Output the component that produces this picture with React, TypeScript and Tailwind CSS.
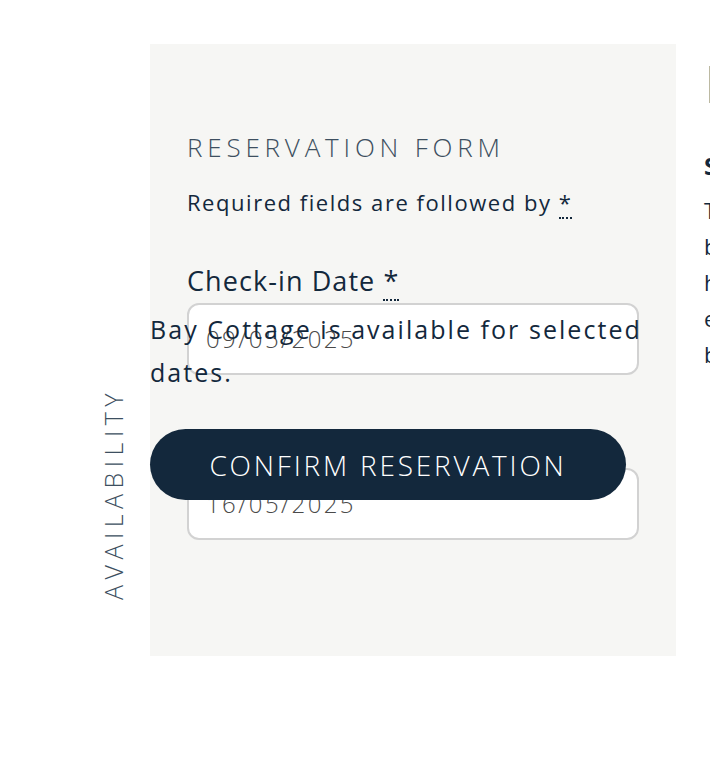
import React from "react";

const font = { fontFamily: "'Open Sans', 'Noto Sans', sans-serif" };

function DateField({ label, value }: { label: string; value: string }) {
  return (
    <div className="flex flex-col">
      <label className="text-[27px] leading-[30px] tracking-[0.04em] text-[#13283c]">
        {label}{" "}
        <abbr title="required" className="no-underline border-b-2 border-dotted border-[#13283c]">
          *
        </abbr>
      </label>
      <div className="mt-[7px] h-[72px] rounded-[12px] border-2 border-[#d2d2d2] bg-white px-[17px] flex items-center">
        <span className="text-[24px] font-light tracking-[0.1em] text-[#4a4a4a]">{value}</span>
      </div>
    </div>
  );
}

export default function App() {
  return (
    <div style={font} className="w-[710px] h-[776px] overflow-hidden bg-white">
      <div className="flex pt-[44px]">
        <div className="w-[150px] shrink-0 flex flex-col items-end justify-end pr-[22px] pb-[56px]">
          <span className="[writing-mode:vertical-rl] rotate-180 text-[25px] leading-[30px] font-light tracking-[0.22em] text-[#3d4f60]">
            AVAILABILITY
          </span>
        </div>

        <section className="relative w-[526px] h-[612px] shrink-0 bg-[#f6f6f4] px-[37px] pt-[88px]">
          <h2 className="text-[26px] leading-[30px] font-light tracking-[0.185em] text-[#3d4f60]">
            RESERVATION FORM
          </h2>
          <p className="mt-[26px] text-[22px] leading-[28px] tracking-[0.07em] text-[#13283c]">
            Required fields are followed by{" "}
            <abbr title="required" className="no-underline border-b-2 border-dotted border-[#13283c]">
              *
            </abbr>
          </p>
          <div className="mt-[50px] flex flex-col gap-[56px]">
            <DateField label="Check-in Date" value="09/05/2025" />
            <DateField label="Check-out Date" value="16/05/2025" />
          </div>

          {/* availability result sits over the form */}
          <div className="absolute left-0 top-[264px] w-[526px]">
            <p className="text-[25px] leading-[43px] tracking-[0.082em] text-[#13283c]">
              Bay Cottage is available for selected dates.
            </p>
            <button className="mt-[35px] w-[476px] h-[71px] rounded-full bg-[#13283c] text-white text-[28px] font-light tracking-[0.1em]">
              CONFIRM RESERVATION
            </button>
          </div>
        </section>

        <div className="ml-[28px] w-[360px] shrink-0 pt-[9px] tracking-[0.06em]">
          <h2 className="text-[52px] leading-[60px] text-[#b8b49c] whitespace-nowrap">
            Bay Cottage
          </h2>
          <h3 className="mt-[38px] text-[24px] leading-[30px] font-bold text-[#13283c]">Stay details</h3>
          <div className="mt-[11px] text-[22px] leading-[36px] text-[#13283c] whitespace-nowrap">
            <span className="block">The cottage sleeps four guests and</span>
            <span className="block">boasts sweeping views of the bay,</span>
            <span className="block">heated floors and a private deck,</span>
            <span className="block">ensuring a relaxed stay for every</span>
            <span className="block">booking.</span>
          </div>
        </div>
      </div>
    </div>
  );
}
